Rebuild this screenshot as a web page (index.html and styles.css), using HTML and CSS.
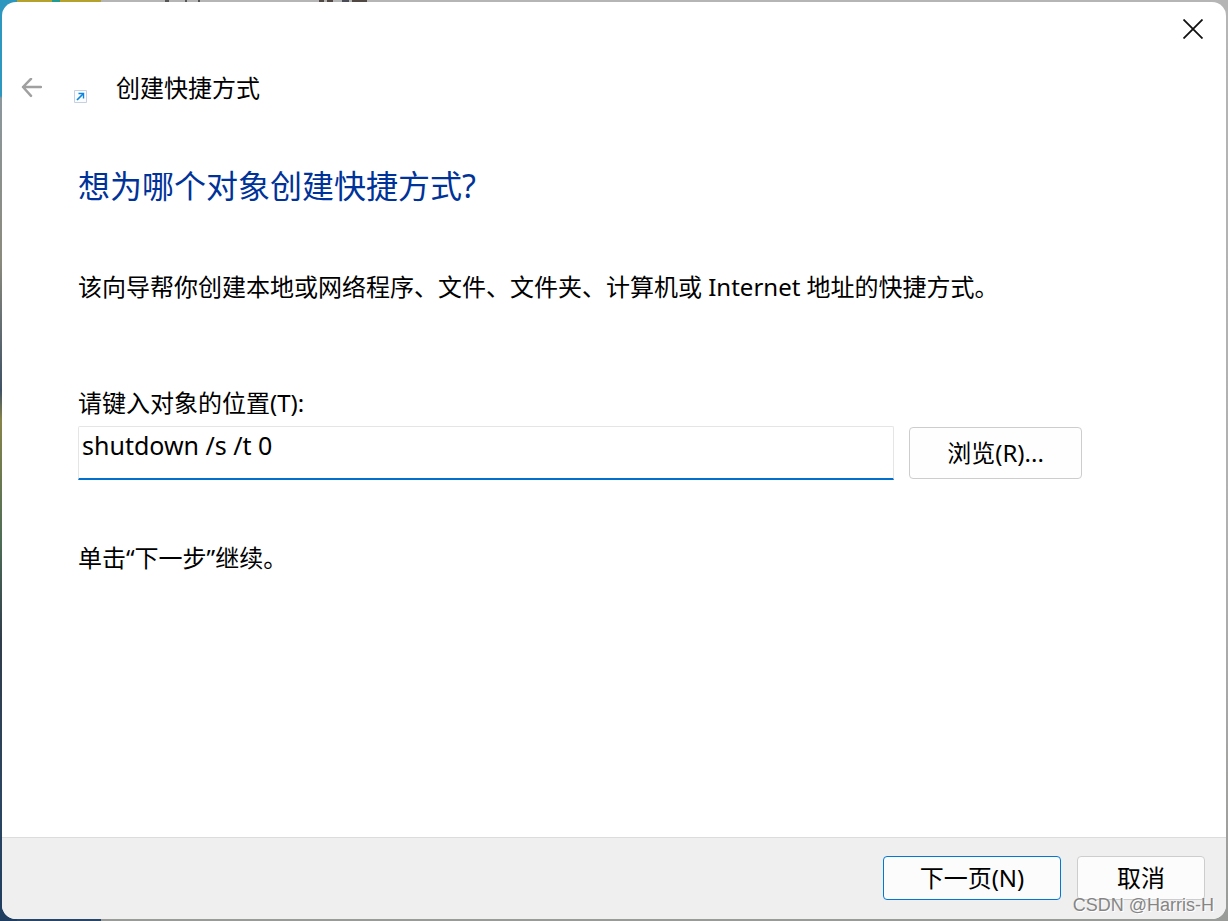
FILE: index.html
```html
<!DOCTYPE html>
<html lang="zh-CN">
<head>
<meta charset="utf-8">
<meta name="viewport" content="width=device-width, initial-scale=1">
<title>创建快捷方式</title>
<link rel="stylesheet" href="styles.css">
</head>
<body>
<main class="dialog">
  <div class="titlebar">
    <button class="icon-button" type="button" aria-label="关闭">
      <svg width="20" height="20" viewBox="0 0 20 20" fill="none" stroke="#111" stroke-width="1.8"><path d="M.5.5l19 19M19.5.5l-19 19"/></svg>
    </button>
  </div>
  <header class="header">
    <button class="icon-button" type="button" aria-label="返回" disabled>
      <svg width="22" height="20" viewBox="0 0 22 20" fill="none" stroke="#a0a0a0" stroke-width="2.5" stroke-linecap="round" stroke-linejoin="round"><path d="M21 9H3M11 .8L3 9l8 8.800"/></svg>
    </button>
    <svg class="shortcut" width="13" height="13" viewBox="0 0 13 13" fill="none"><path d="M.5.5h12v12H.5z" fill="#fbfcfe" stroke="#c5d0e2"/><path d="M3 10l6-6" stroke="#0a86e0" stroke-width="1.700"/><path d="M4.500 3.500h5v5" stroke="#0a86e0" stroke-width="1.400"/></svg>
    <h1 class="title">创建快捷方式</h1>
  </header>
  <form class="content">
    <h2 class="question">想为哪个对象创建快捷方式?</h2>
    <p class="intro">该向导帮你创建本地或网络程序、文件、文件夹、计算机或 Internet 地址的快捷方式。</p>
    <label class="label" for="location">请键入对象的位置(T):</label>
    <div class="row">
      <input class="location" id="location" type="text" value="shutdown /s /t 0">
      <button class="button browse" type="button">浏览(R)...</button>
    </div>
    <p class="hint">单击“下一步”继续。</p>
  </form>
  <footer class="footer">
    <button class="button next" type="button">下一页(N)</button>
    <button class="button cancel" type="button">取消</button>
  </footer>
  <span class="watermark">CSDN @Harris-H</span>
</main>
</body>
</html>
```
FILE: styles.css
```css
* {
  box-sizing: border-box;
}

body {
  margin: 0;
  min-height: 100vh;
  display: flex;
  padding: 2px;
  font: 24px/32px "Noto Sans", "Noto Sans CJK SC", sans-serif;
  color: #000;
  background:
    linear-gradient(90deg, #b5a12d 35px, #239b91 35px 43px, #b5a12d 43px) 17px 0 / 84px 2px no-repeat,
    linear-gradient(90deg, #555 4px, transparent 4px 20px, #555 20px 22px, transparent 22px 33px, #555 33px 35px, transparent 35px) 165px 0 / 40px 2px no-repeat,
    linear-gradient(90deg, #514843 5px, transparent 5px 8px, #514843 8px 14px, transparent 14px 23px, #4b4b55 23px 30px, transparent 30px 33px, #514843 33px 48px, transparent 48px) 319px 0 / 50px 2px no-repeat,
    linear-gradient(#2e97bf 0 96px, #8c979d 98px, #8b8a7d 260px, #405266 390px, #87844a 420px, #4e6d56 540px, #303c4b 640px, #2c4661 800px, #1f3d60) 0 0 / 17px 100% no-repeat,
    linear-gradient(#294565, #294565) 0 100% / 101px 2px no-repeat,
    linear-gradient(#b5b5b5, #b0b0b0 60%, #999b98);
}

.dialog {
  position: relative;
  flex: 1;
  display: flex;
  flex-direction: column;
  overflow: hidden;
  border-radius: 14px;
  background: #fff;
}

.titlebar {
  display: flex;
  justify-content: flex-end;
  padding: 17px 23px 0;
}

.icon-button {
  display: flex;
  padding: 0;
  border: 0;
  background: none;
}

.header {
  display: flex;
  align-items: center;
  padding: 33px 18px 0;
}

.shortcut {
  margin: 16px 29px 0 32px;
}

.title {
  margin: 0;
  font-size: 24px;
  font-weight: 400;
}

.content {
  flex: 1;
  padding: 60px 144px 0 76px;
}

.question {
  margin: 0;
  font-size: 32px;
  line-height: 44px;
  font-weight: 400;
  color: #003399;
}

.intro {
  margin: 63px 0 84px;
}

.label {
  display: block;
  margin-bottom: 7px;
}

.row {
  display: flex;
  align-items: center;
  gap: 15px;
}

.location {
  flex: 1;
  min-width: 0;
  height: 54px;
  padding: 0 3px 16px;
  border: 1px solid #e5e5e5;
  border-bottom: 2px solid #0070cc;
  border-radius: 2px 2px 0 0;
  outline: 0;
  font: inherit;
  font-size: 25px;
  color: inherit;
  background: #fff;
}

.button {
  padding: 0;
  border: 1px solid #cdcdcd;
  border-radius: 4px;
  font: inherit;
  color: inherit;
  background: #fcfcfc;
}

.browse {
  width: 173px;
  height: 52px;
  background: #fefefe;
}

.hint {
  margin: 62px 0 0;
}

.footer {
  display: flex;
  justify-content: flex-end;
  gap: 16px;
  padding: 18px 21px 19px;
  border-top: 1px solid #dcdcdc;
  background: #efefef;
}

.next,
.cancel {
  height: 44px;
}

.next {
  width: 178px;
  border-color: #0078d4;
}

.cancel {
  width: 128px;
}

.watermark {
  position: absolute;
  right: 12px;
  bottom: 2px;
  font: 18px/24px "Liberation Sans", sans-serif;
  color: #858585;
  text-shadow: 1px 1px 0 #fff;
}
```
